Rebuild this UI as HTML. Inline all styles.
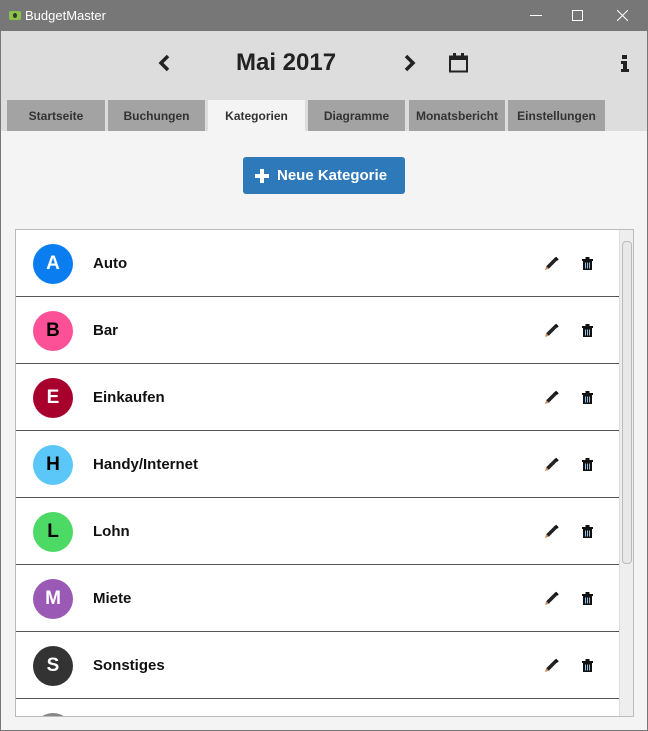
<!DOCTYPE html>
<html><head><meta charset="utf-8"><style>
*{margin:0;padding:0;box-sizing:border-box}
body{width:648px;height:731px;overflow:hidden;font-family:"Liberation Sans",sans-serif;background:#f4f4f4;position:relative}
.frame{position:absolute;left:0;top:0;width:648px;height:731px;border:1px solid #777;border-top:none;pointer-events:none}
.title{position:absolute;left:0;top:0;width:648px;height:31px;background:#777;color:#fff;font-size:13px}
.title .t{position:absolute;left:25px;top:8px}
.logo{position:absolute;left:9px;top:11px;width:12px;height:9px;background:#8bc34a;border-radius:2px}
.logo:after{content:"";position:absolute;left:4px;top:2px;width:4px;height:5px;background:#333;border-radius:50%}
.head{position:absolute;left:0;top:31px;width:648px;height:100px;background:#ddd}
.month{position:absolute;left:236px;top:49px;font-size:24px;font-weight:bold;color:#222}
.tab{position:absolute;top:100px;height:31px;background:#a3a3a3;font-size:12px;font-weight:bold;color:#333;text-align:center;line-height:33px}
.tab.a{background:#f4f4f4}
.btn{position:absolute;left:243px;top:157px;width:162px;height:37px;background:#2e79b9;border-radius:3px;color:#fff;font-weight:bold;font-size:15px;line-height:37px;padding-left:34px}
.btn:before{content:"";position:absolute;left:12px;top:17px;width:14px;height:4px;background:#fff}
.btn:after{content:"";position:absolute;left:17px;top:12px;width:4px;height:14px;background:#fff}
.list{position:absolute;left:15px;top:229px;width:619px;height:488px;border:1px solid #bbb;background:#fff;overflow:hidden}
.row{position:absolute;left:0;width:604px;height:67px;border-bottom:1px solid #555}
.c{position:absolute;left:17px;top:14px;width:40px;height:40px;border-radius:50%;text-align:center;line-height:40px;font-size:19px;font-weight:bold}
.n{position:absolute;left:77px;top:25px;font-size:15px;font-weight:bold;color:#111}
.sb{position:absolute;left:603px;top:0;width:15px;height:486px;background:#eee;border-left:1px solid #ddd}
.th{position:absolute;left:2px;top:11px;width:10px;height:323px;border:1px solid #bbb;border-radius:4px;background:#e8e8e8}
</style></head><body>
<div class="title"><div class="logo"></div><span class="t">BudgetMaster</span>
<svg style="position:absolute;left:530px;top:15px" width="12" height="2"><rect width="12" height="1" fill="#fff"/></svg>
<svg style="position:absolute;left:572px;top:10px" width="11" height="11"><rect x=".5" y=".5" width="10" height="10" fill="none" stroke="#fff"/></svg>
<svg style="position:absolute;left:617px;top:10px" width="11" height="11"><path d="M0 0L11 11M11 0L0 11" stroke="#fff"/></svg>
</div>
<div class="head">
<svg style="position:absolute;left:157px;top:23px" width="14" height="18"><path d="M11 2L4 9L11 16" fill="none" stroke="#222" stroke-width="3.5"/></svg>
<svg style="position:absolute;left:403px;top:23px" width="14" height="18"><path d="M3 2L10 9L3 16" fill="none" stroke="#222" stroke-width="3.5"/></svg>
<svg style="position:absolute;left:449px;top:22px" width="20" height="20"><rect x="1" y="3.5" width="17" height="15" fill="none" stroke="#222" stroke-width="2"/><rect x="1" y="3" width="17" height="4" fill="#222"/><rect x="4" y="0" width="3" height="5" fill="#222"/><rect x="12" y="0" width="3" height="5" fill="#222"/></svg>
<svg style="position:absolute;left:620px;top:24px" width="10" height="18"><rect x="2" y="0" width="5" height="4" fill="#222"/><path d="M1 6H7V14H9V17H1V14H3V9H1Z" fill="#222"/></svg>
</div>
<div class="month">Mai 2017</div>
<div class="tab" style="left:7px;width:98px">Startseite</div>
<div class="tab" style="left:108px;width:97px">Buchungen</div>
<div class="tab a" style="left:208px;width:97px">Kategorien</div>
<div class="tab" style="left:308px;width:97px">Diagramme</div>
<div class="tab" style="left:409px;width:96px">Monatsbericht</div>
<div class="tab" style="left:508px;width:97px">Einstellungen</div>
<div class="btn">Neue Kategorie</div>
<div class="list">
<div class="row" style="top:0"><div class="c" style="background:#0a7df0;color:#fff">A</div><div class="n">Auto</div></div>
<div class="row" style="top:67px"><div class="c" style="background:#fd5197;color:#000">B</div><div class="n">Bar</div></div>
<div class="row" style="top:134px"><div class="c" style="background:#a8002c;color:#fff">E</div><div class="n">Einkaufen</div></div>
<div class="row" style="top:201px"><div class="c" style="background:#5ac7f8;color:#000">H</div><div class="n">Handy/Internet</div></div>
<div class="row" style="top:268px"><div class="c" style="background:#4cd964;color:#000">L</div><div class="n">Lohn</div></div>
<div class="row" style="top:335px"><div class="c" style="background:#9b59b6;color:#fff">M</div><div class="n">Miete</div></div>
<div class="row" style="top:402px"><div class="c" style="background:#333;color:#fff">S</div><div class="n">Sonstiges</div></div>
<div class="row" style="top:469px;border:none"><div class="c" style="background:#888"></div></div>
<div class="sb"><div class="th"></div></div>
</div>
<svg style="position:absolute;left:0;top:0" width="648" height="731">
<defs>
<g id="p"><path d="M2.5 11.5L11.5 2.5" stroke="#222" stroke-width="3.6" stroke-linecap="butt"/><path d="M0 14L1.2 10.3L3.7 12.8Z" fill="#c85"/><path d="M10.5 1.5L13 4" stroke="#111" stroke-width="2"/></g>
<g id="d"><rect x="0" y="2" width="11" height="2" fill="#111"/><rect x="3.5" y="0" width="4" height="2.5" fill="#111"/><path d="M1 4H10V13H1Z" fill="#111"/><path d="M3.5 5.5V11.5M5.5 5.5V11.5M7.5 5.5V11.5" stroke="#9bd" stroke-width="1"/></g>
</defs>
<use href="#p" x="545" y="256"/><use href="#d" x="582" y="257"/>
<use href="#p" x="545" y="323"/><use href="#d" x="582" y="324"/>
<use href="#p" x="545" y="390"/><use href="#d" x="582" y="391"/>
<use href="#p" x="545" y="457"/><use href="#d" x="582" y="458"/>
<use href="#p" x="545" y="524"/><use href="#d" x="582" y="525"/>
<use href="#p" x="545" y="591"/><use href="#d" x="582" y="592"/>
<use href="#p" x="545" y="658"/><use href="#d" x="582" y="659"/>
</svg>
<div class="frame"></div>
</body></html>
